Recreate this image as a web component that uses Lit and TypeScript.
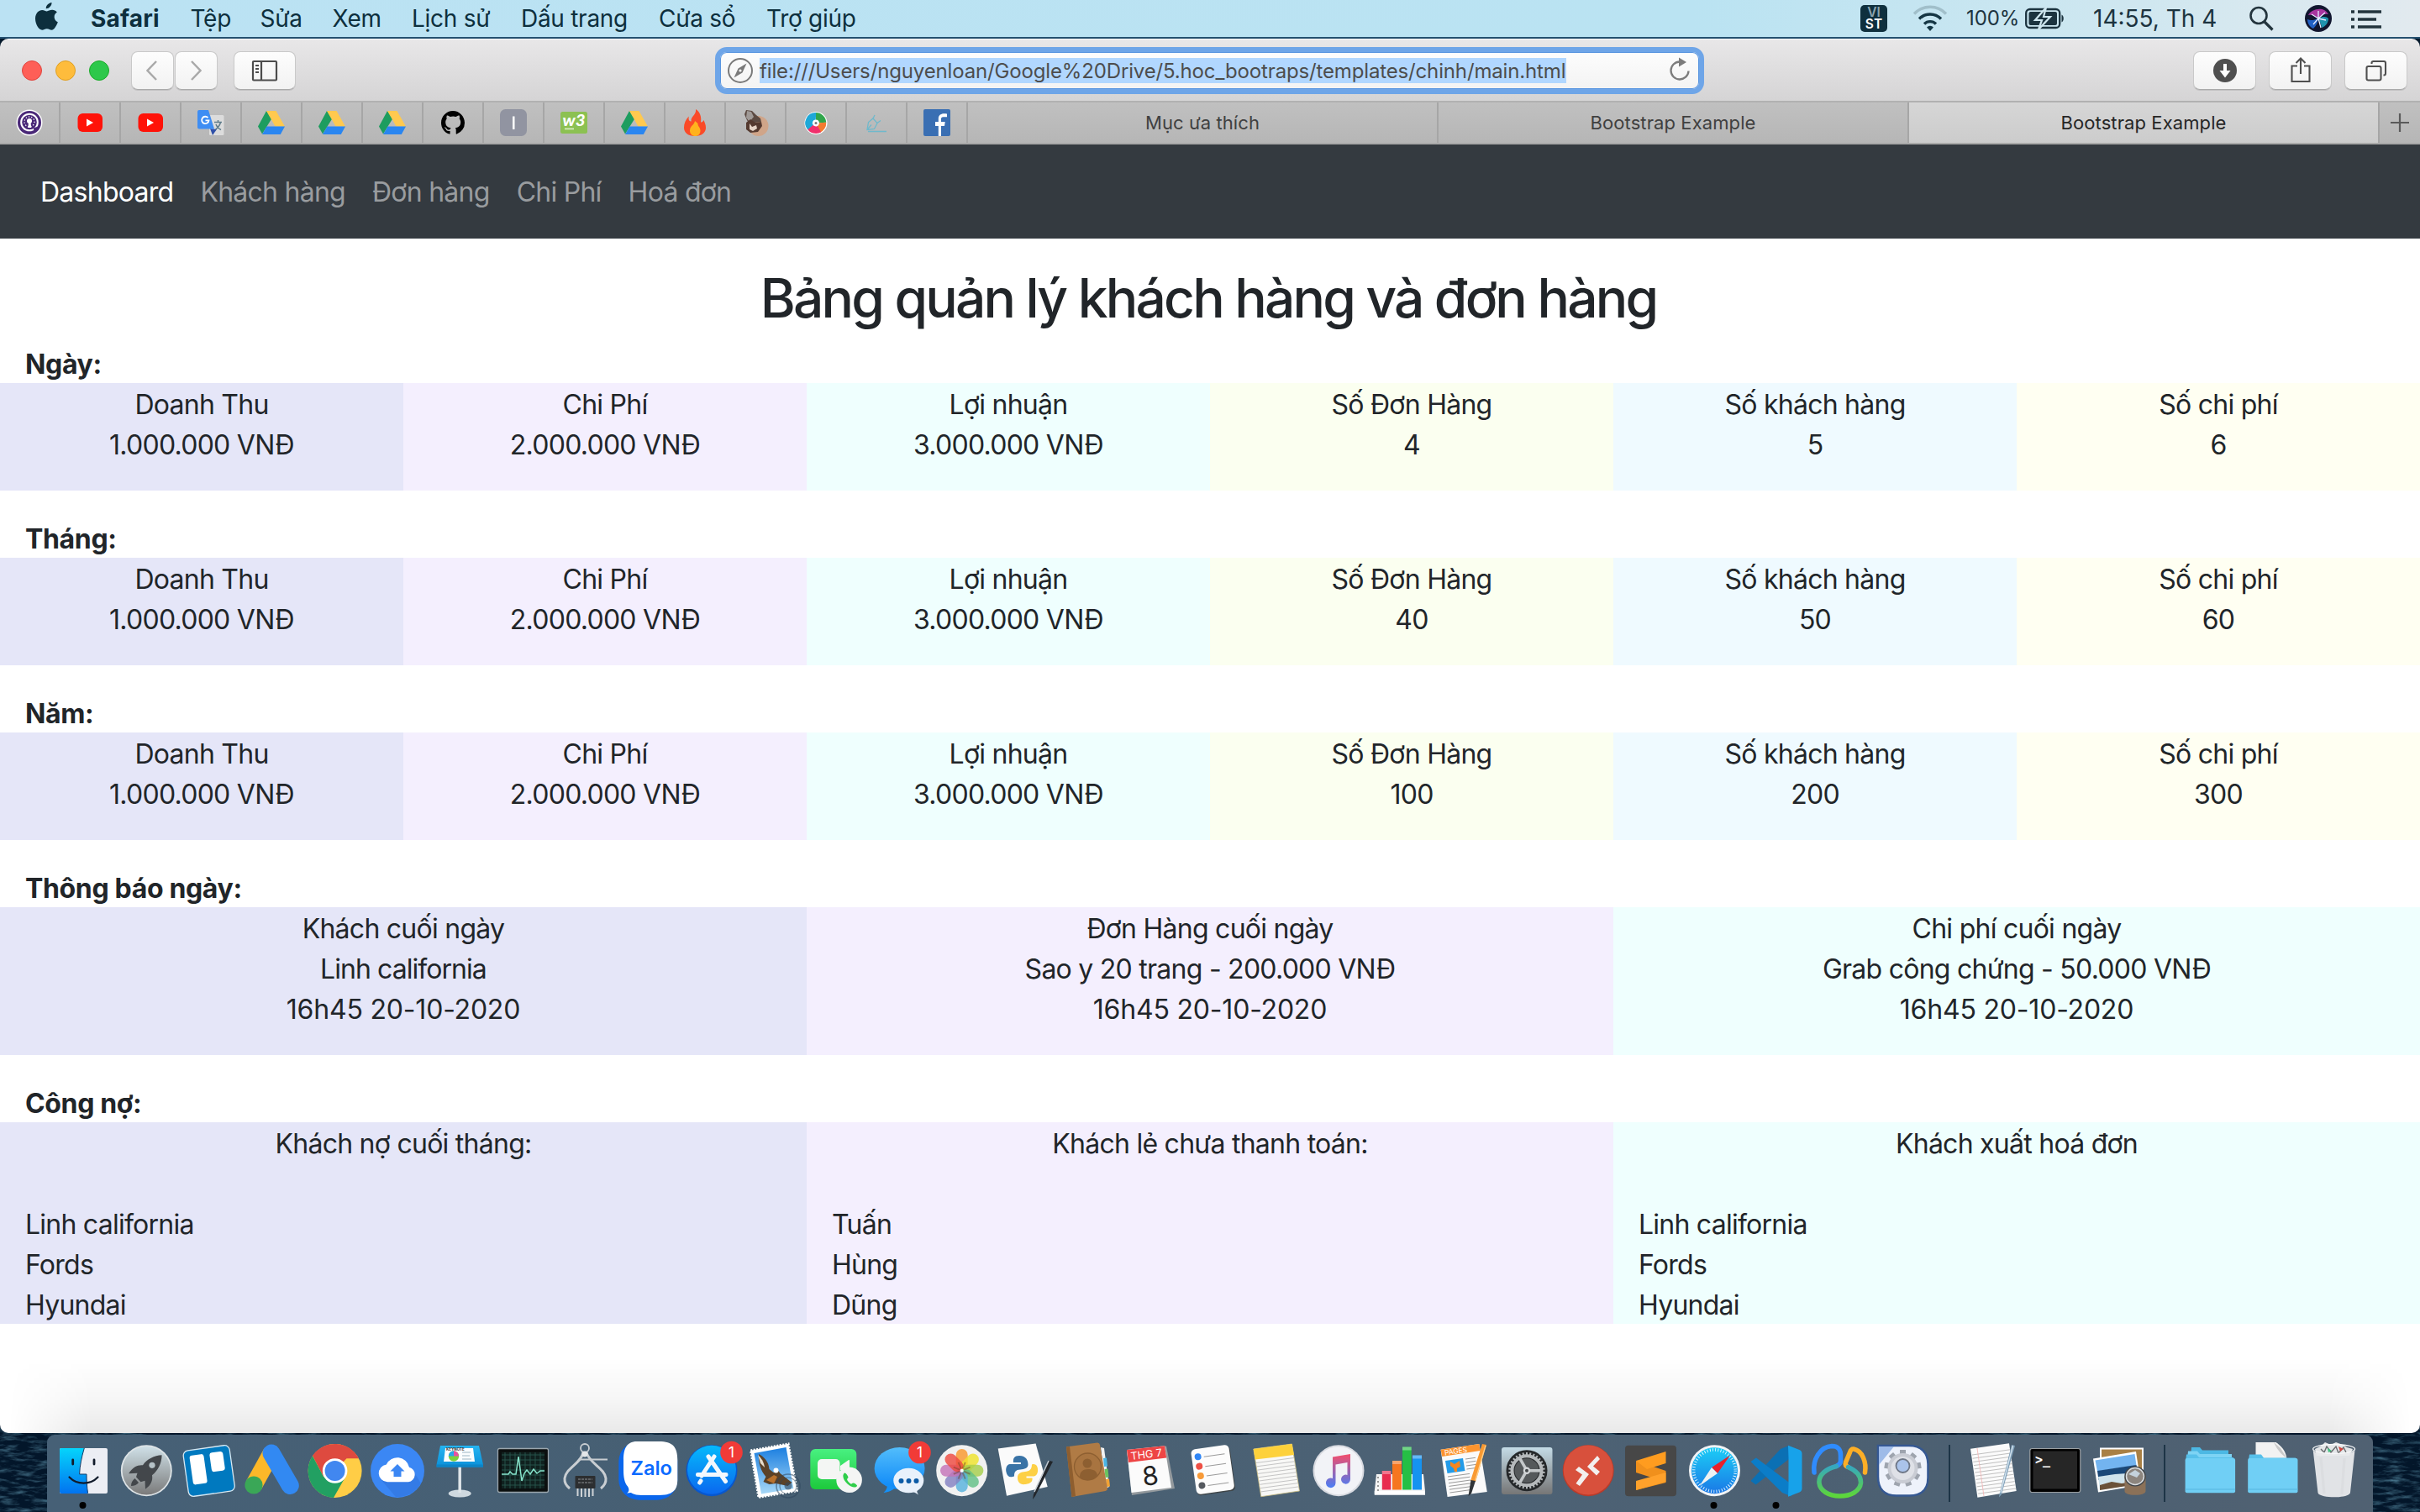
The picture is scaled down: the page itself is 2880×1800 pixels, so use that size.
import { LitElement, html, svg, css } from "lit";
import { customElement } from "lit/decorators.js";
import { classMap } from "lit/directives/class-map.js";

const MENUS: { label: string; width: number }[] = [
  { label: "Safari", width: 118.5 },
  { label: "Tệp", width: 83 },
  { label: "Sửa", width: 86 },
  { label: "Xem", width: 94.5 },
  { label: "Lịch sử", width: 130 },
  { label: "Dấu trang", width: 164 },
  { label: "Cửa sổ", width: 128 },
  { label: "Trợ giúp", width: 120 },
];

const NAV = ["Dashboard", "Khách hàng", "Đơn hàng", "Chi Phí", "Hoá đơn"];

const stats = (orders: string, customers: string, costs: string): string[][] => [
  ["Doanh Thu", "1.000.000 VNĐ"],
  ["Chi Phí", "2.000.000 VNĐ"],
  ["Lợi nhuận", "3.000.000 VNĐ"],
  ["Số Đơn Hàng", orders],
  ["Số khách hàng", customers],
  ["Số chi phí", costs],
];

const PERIODS = [
  { title: "Ngày:", cells: stats("4", "5", "6") },
  { title: "Tháng:", cells: stats("40", "50", "60") },
  { title: "Năm:", cells: stats("100", "200", "300") },
  {
    title: "Thông báo ngày:",
    cells: [
      ["Khách cuối ngày", "Linh california", "16h45 20-10-2020"],
      ["Đơn Hàng cuối ngày", "Sao y 20 trang - 200.000 VNĐ", "16h45 20-10-2020"],
      ["Chi phí cuối ngày", "Grab công chứng - 50.000 VNĐ", "16h45 20-10-2020"],
    ],
  },
];

const DEBTS = [
  { title: "Khách nợ cuối tháng:", names: ["Linh california", "Fords", "Hyundai"] },
  { title: "Khách lẻ chưa thanh toán:", names: ["Tuấn", "Hùng", "Dũng"] },
  { title: "Khách xuất hoá đơn", names: ["Linh california", "Fords", "Hyundai"] },
];

const range = (n: number) => Array.from({ length: n }, (_, i) => i);

/* ---------- pinned tab icons, 72 x 48 ---------- */
const youtube = svg`<rect x="20.5" y="13" width="29.5" height="22" rx="6" fill="#ff1208"/><path d="M31 19.5v9l8-4.5z" fill="#fff"/>`;
const drive = svg`<path d="M29 10 19 28.500l5 9 11.500-18.500z" fill="#1d9d5f"/><path d="M29 10h11.500L51 28.500H39.500z" fill="#ffc94f"/><path d="M29.500 28.500H51L45.800 38H24z" fill="#2a86f0"/>`;
const PINS = [
  svg`<circle cx="35" cy="24" r="15.5" fill="#fff"/><circle cx="35" cy="24" r="14" fill="#4a2878"/><circle cx="35" cy="23.500" r="9.800" fill="none" stroke="#fff" stroke-width="2"/><circle cx="35" cy="23" r="6" fill="none" stroke="#fff" stroke-width="1.300" stroke-dasharray="1.300 2"/><circle cx="35" cy="22" r="3" fill="#fff"/><path d="M34 24h2.500l.8 6h-4z" fill="#fff"/><path d="M40 32l6-2" stroke="#4a2878" stroke-width="3"/>`,
  youtube,
  youtube,
  svg`<rect x="33" y="15" width="17.5" height="24" rx="1.500" fill="#dcdcdc"/><path d="M34 31l8 1-5 7z" fill="#3050a8"/><path d="M21 9h11l7 22.500H21a2 2 0 0 1-2-2V11a2 2 0 0 1 2-2z" fill="#3e8df3"/><path d="M31.500 18.200a4.200 4.200 0 1 0 1 3.200h-4" fill="none" stroke="#fff" stroke-width="1.800"/><path d="M39 23.500h9M43.500 21v2.500M46.500 23.500c-1 5-4 7-6 8.500M41 26c1 3 3 5 6 6.500" fill="none" stroke="#607d8b" stroke-width="1.500"/>`,
  drive,
  drive,
  drive,
  svg`<path d="M35 10C27.300 10 21 16.300 21 24.200c0 6.200 4 11.500 9.600 13.400.7.1 1-.3 1-.7v-3c-3.900.8-4.700-1.600-4.700-1.600-.6-1.600-1.600-2-1.600-2-1.300-.9.1-.9.1-.9 1.400.1 2.200 1.500 2.200 1.500 1.200 2.100 3.200 1.500 4.100 1.200.1-1 .5-1.600.9-1.900-3.100-.4-6.400-1.600-6.400-7 0-1.500.6-2.800 1.500-3.800-.2-.4-.6-1.800.1-3.800 0 0 1.200-.4 3.900 1.400a13.300 13.300 0 0 1 7 0c2.700-1.800 3.900-1.400 3.900-1.400.7 2 .3 3.400.1 3.800.9 1 1.500 2.300 1.500 3.800 0 5.400-3.300 6.600-6.400 7 .5.400.9 1.300.9 2.600v4.100c0 .4.300.9 1 .7A14.200 14.200 0 0 0 49 24.200C49 16.300 42.700 10 35 10z" fill="#000"/>`,
  svg`<rect x="19" y="8" width="32" height="32" rx="6.500" fill="#9194a1"/><rect x="34" y="16.500" width="2.500" height="15.500" fill="#fff"/>`,
  svg`<rect x="19" y="11" width="32" height="26" rx="2.500" fill="#8cc152"/><text x="35" y="28" text-anchor="middle" font-family="Lato" font-weight="900" font-style="italic" font-size="19" textLength="27" lengthAdjust="spacingAndGlyphs" fill="#fff">w3</text><rect x="24" y="30.500" width="11" height="1.800" fill="#d5ebbb"/>`,
  drive,
  svg`<path d="M36 8c1 7-6 8-5.500 14.500C27 22 27.500 19 27.800 16.500 24 20 22 25 22 30c0 6 5 10 13 10s13-4 13-10c0-4-1.500-6-2.500-9-1 2-2 2.500-3.500 2.500C43 17 41 11 36 8z" fill="#fa4a28"/><path d="M35 22c-1 5-6 6-6 11.500 0 4 3 6.500 6.500 6.500s6-2.500 6-6.500-3.500-5.500-3-8.500z" fill="#ffb21e"/>`,
  svg`<circle cx="38.500" cy="28" r="12" fill="#d0a589"/><path d="M24 9l7 1 5 5 5 4 1 4-8 1-6 3-4-8-2-5z" fill="#5c4a42"/><path d="M25 10l5 1 3 6-5 6-4-5z" fill="#a09a97"/><path d="M24 24l5-4 6 4 7-1 1 5-5 7-9 1-5-4z" fill="#553a30"/><path d="M28 25l3 4 5-2 1 4-5 3-4-2z" fill="#e5d3c6"/>`,
  svg`<circle cx="35" cy="24.500" r="13.500" fill="#fff"/><g fill="none" stroke-width="8.500"><path d="M35 16.300A8 8 0 0 1 43 24" stroke="#31a64c"/><path d="M43 24a8 8 0 0 1-5 8" stroke="#f47b30"/><path d="M39 31.600a8 8 0 0 1-11-3" stroke="#f0306c"/><path d="M28.500 29.500A8 8 0 0 1 35 16.300" stroke="#1ea8d8"/></g><circle cx="35" cy="24.500" r="3.500" fill="#fff"/><circle cx="35" cy="24.500" r="1.500" fill="#777"/>`,
  svg`<g fill="none" stroke="#6fb9cc" stroke-width="1.300"><path d="M24 32.500l1.500-9 5.500-4.500 5 5.500-3.500 7zM24 32.500l5-6"/><path d="M31 19l2-4M36 24.500l4-3M25 34.500h22" /></g>`,
  svg`<rect x="19" y="8" width="32" height="32" rx="2" fill="#3a6fb3"/><path d="M40 40V28h4l.7-5H40v-3.300c0-1.500.5-2.500 2.600-2.500H47v-3.700c-.5-.1-2-.2-3.600-.2-4 0-6.600 2.200-6.600 6.300V23H33v5h3.800v12z" fill="#fff"/>`,
];

/* ---------- dock icons, 74.67 x 92 ---------- */
const badge = svg`<circle cx="62.500" cy="21" r="13.300" fill="#f13b37"/><text x="62.500" y="27" text-anchor="middle" font-size="17" font-family="Inter" fill="#fff">1</text>`;
const dot = svg`<circle cx="36.500" cy="84" r="4" fill="#000"/>`;

const finder = svg`<rect x="9" y="16" width="57" height="54" rx="2" fill="#eceef4"/><path d="M11 16h27.300C35 27 33 37 32.600 47H41c0 8 .5 16 1.600 23H11a2 2 0 0 1-2-2V18a2 2 0 0 1 2-2z" fill="url(#gFinder)"/><path d="M38.300 16C35 27 33 37 32.600 47H41c0 8 .5 16 1.600 22.500" fill="none" stroke="#153b66" stroke-width="1"/><path d="M24.700 30v5M50 30v5" stroke="#111b2b" stroke-width="2.800" stroke-linecap="round"/><path d="M20.500 50.500c9 9.500 25 9.500 34 0" fill="none" stroke="#111b2b" stroke-width="2.200" stroke-linecap="round"/>${dot}`;
const launchpad = svg`<circle cx="38.300" cy="42.700" r="30.500" fill="#dde3e6"/><circle cx="38.300" cy="42.700" r="28.700" fill="url(#gLaunch)"/><path d="M56.600 24.300c-9 .5-17.500 4.500-22.600 12-6-.6-12 2-16.800 10l10.300-.5-1.500 4.500 5.500 6 5-1.500.5 10c7-5 9-10.500 8-16.500 7.500-6 11.500-14.500 11.600-24z" fill="#43474b"/><circle cx="45" cy="36.300" r="3.600" fill="#b5c1c6"/><path d="M20 61c0-4 1.500-6.500 4.500-9l4.500 5c-2 2.500-5 4-9 4z" fill="#43474b"/>`;
const trello = svg`<g transform="rotate(-8 37.800 43)"><rect x="10" y="15.500" width="55.500" height="55" rx="6" fill="#0079bf" stroke="#d7e8f2" stroke-width="1.300"/><rect x="17" y="22" width="17" height="35" rx="3" fill="#fff"/><rect x="41" y="22" width="16" height="23" rx="3" fill="#fff"/></g>`;
const ads = svg`<path d="M37 22 16 60" stroke="#fcb829" stroke-width="20.600"/><path d="M37 22 59.300 60.500" stroke="#3289f2" stroke-width="21" stroke-linecap="round"/><circle cx="16" cy="60" r="10.600" fill="#3aa757"/>`;
const chrome = svg`<circle cx="38.600" cy="43" r="32" fill="#ffcd46"/><path d="M38.600 43 52.500 28.300H67A32 32 0 0 0 12 25l13 25z" fill="#de4a3f"/><path d="M12 25.300A32 32 0 0 0 37 75L49.500 53 25 50z" fill="#22a062"/><circle cx="38.600" cy="43" r="14.800" fill="#fff"/><circle cx="38.600" cy="43" r="12" fill="#4187f0"/>`;
const backup = svg`<circle cx="38" cy="43" r="32" fill="#3b87f4"/><path d="M18 53 36 74A32 32 0 0 0 66 58L58 45z" fill="#347be6"/><path d="M26 56.300a10.500 10.500 0 0 1-1.200-20.900A14.500 14.500 0 0 1 52 38.700 9 9 0 0 1 51 56.300z" fill="#fff"/><path d="M38 35l-8.500 8.500h4V50h9v-6.500h4z" fill="#3b87f4"/>`;
const keynote = svg`<ellipse cx="37.200" cy="70" rx="13.500" ry="4.500" fill="#cfd9e0"/><path d="M37.200 38v31" stroke="#dfe5e9" stroke-width="3.500"/><path d="M14 13h46l5 22.500v3H9.600v-3z" fill="url(#gKey)"/><path d="M9.600 35.500H65v3H9.600z" fill="#0c84c6"/><path d="M20 16h33l2 16H18z" fill="#fbfdfe"/><circle cx="30" cy="25.500" r="6.200" fill="#7bd23f"/><path d="M30 25.500v-6.200a6.200 6.200 0 0 1 6 6.200z" fill="#e84fa4"/><path d="M30 25.500h-6.200a6.200 6.200 0 0 1 6.200-6.200z" fill="#27a7ea"/><path d="M40 21h10M40 25h9M40 29h11" stroke="#9bb5c4" stroke-width="1.200"/><text x="21" y="19.500" font-size="4.500" font-weight="700" font-family="Inter" fill="#333">KEYNOTE</text>`;
const activity = svg`<rect x="8.500" y="16.500" width="60" height="52" rx="2" fill="#0b0f0f" stroke="#9ba6ad" stroke-width="1.300"/><rect x="13" y="21" width="51" height="43" fill="#10211f"/><path d="${range(8).map((i) => `M${17 + i * 6} 21v43`).join("")}${range(7).map((i) => `M13 ${24 + i * 6}h51`).join("")}" stroke="#28584e" stroke-width=".9"/><path d="M13 47h8l2-3 3 3h4l3-21 4 29 3-9 3-4 4 5 4-6 4 5 4-3h5" fill="none" stroke="#86e4cb" stroke-width="1.500"/>`;
const caliper = svg`<g fill="none" stroke="#c9ced2"><circle cx="37" cy="16" r="5" stroke-width="1.800"/><path d="M35 21C33 34 14 40 13 52c-.5 6 2 9 6 12M39 21c3 13 22 19 23 31 .5 6-2 9-6 12" stroke-width="3"/><path d="M30 29.500h34" stroke-width="1.800"/></g><circle cx="37" cy="23" r="3.500" fill="#e4e6e8"/><rect x="25.500" y="49" width="24" height="15" rx="1" fill="#2c2e30"/><path d="M29 53h17M29 57h17" stroke="#8c9093" stroke-width="1.200" stroke-dasharray="3 1"/><path d="M28.500 64v9M33 64v10M37.500 64v10M42 64v10M46.500 64v9" stroke="#cfd3d6" stroke-width="2"/>`;
const zalo = svg`<rect x="2.300" y="8" width="70" height="69.700" rx="24" fill="#0a66ec"/><path d="M24 8h26c17 0 22.300 7 22.300 22v24c0 13-7 18-22 18H30c-7 0-10-1-13-3l-5 .5c3-2 3-5 1-8C9 57 8 50 8 42V30C8 18 11 8 24 8z" fill="#fff"/><text x="16.500" y="48" font-size="22.500" font-weight="600" font-family="Inter" textLength="49.500" lengthAdjust="spacingAndGlyphs" fill="#0b6bff">Zalo</text>`;
const appstore = svg`<circle cx="39" cy="42.700" r="30.500" fill="#0757cf"/><circle cx="39" cy="41.800" r="29" fill="url(#gStore)"/><g stroke="#f3f8fd" stroke-width="5" stroke-linecap="round"><path d="M35 26 L55.500 55.500M42 26 27 49M22.500 47.500H56"/><path d="M26 55l-1.300 2"/></g>${badge}`;
const mail = svg`<path d="M10.300 18.700 55.300 10.700 65.700 67 19.700 74.700z" fill="#fff" stroke="#fff" stroke-width="2.500" stroke-dasharray="2 1.500"/><path d="M14.500 22 52.500 15 61.300 64 23 70.500z" fill="url(#gMail)"/><path d="M20 23c6 3 12 9 12.500 18l5 4 6-2 2 3 14 11-5 4-14-3-8 1-7-3 3-6c-6-7-9-15-8.500-27z" fill="#5b4228"/><path d="M19 24c4 4 7 8 8 15l-5-5z" fill="#e6dccb"/><path d="M29 54l9-6 4 2-4 8z" fill="#b8722e"/><circle cx="40.500" cy="42.500" r="3" fill="#fff"/><circle cx="55" cy="61" r="14" fill="none" stroke="#30465c" stroke-opacity=".55" stroke-width="1.600"/><circle cx="55" cy="61" r="10" fill="none" stroke="#30465c" stroke-opacity=".5" stroke-width="1.200"/><circle cx="55" cy="61" r="4.500" fill="#30465c" fill-opacity=".6"/>`;
const facetime = svg`<rect x="6.300" y="17" width="55" height="48" rx="6" fill="url(#gFace)"/><rect x="15" y="29" width="26.500" height="24" rx="5" fill="#f4f6f4"/><path d="M42 37l10-7c1 0 1 .5 1 1.500V42H42z" fill="#f4f6f4"/><circle cx="52.600" cy="53.700" r="15.300" fill="#f4f5f4"/><path d="M47 45.500c-3.500 3-1 9 3.500 13s9.500 5.500 11.500 2.500c.5-1-3.500-4-5-3.500l-2 1.200c-2-.8-4.500-3.500-5-5.700l1.500-2c.3-1.500-3-6-4.500-5.500z" fill="#2fce4a"/>`;
const messages = svg`<ellipse cx="38.600" cy="40" rx="30" ry="25" fill="url(#gMsg)"/><path d="M24 58c0 5-1 8-4.500 11 6-.5 11-3 14-6z" fill="#1590f7"/><ellipse cx="49.300" cy="54.500" rx="18" ry="14.800" fill="#e9f1fb"/><path d="M50 67c5 .5 7 2 11 4.500-1.500-2.500-2-4-1.500-6z" fill="#e9f1fb"/><g fill="#0b5aa6"><circle cx="40.500" cy="55" r="3"/><circle cx="49.500" cy="55" r="3"/><circle cx="58.500" cy="55" r="3"/></g>${badge}`;
const photos = svg`<circle cx="37.700" cy="42.700" r="30.500" fill="#f1f1f1"/>${["#f9972c", "#efe32c", "#a6ce4c", "#62bf86", "#58b2dd", "#8481c2", "#c474b8", "#ee4a41"].map(
  (c, i) => svg`<rect x="30.700" y="17" width="14" height="25" rx="7" fill="${c}" fill-opacity=".82" transform="rotate(${i * 45} 37.700 42.700)"/>`
)}<g stroke="#6d3a24" stroke-opacity=".45" stroke-width="2">${range(8).map((i) => svg`<path d="M37.700 40V32" transform="rotate(${i * 45 + 22.5} 37.700 42.700)"/>`)}</g><circle cx="37.700" cy="42.700" r="2" fill="#fff"/>`;
const python = svg`<path d="M5.700 16.500 50.600 10.500 64.700 62 16 72.700z" fill="#fbfbfb"/><path d="M31 25c-6 0-7.500 3-7 8h9v2H20c-4 .5-5.500 5-4.500 9.500S19 51 23 50l2-.5c0-6 2-7.500 7-8s9.500-1.500 9.500-6-2-10.500-10.500-10.500z" fill="#3973a6"/><path d="M46 35.500c0 6-3 8-8 8.500s-9 2-9 7 2.500 9 9.500 8 8.500-4 8-7.500h-7v-2h9c4-1 5-5 4.500-9s-3-6.500-7-5z" fill="#fdd045"/><path d="M67 31l4 1-21 41-3 4 1-6z" fill="#22262b"/><path d="M66 31 49 68" stroke="#c3cad1" stroke-width="1.500"/>`;
const contacts = svg`<path d="M54 15l4 1 6 46-4 2z" fill="#f2f2f2"/><path d="M57 28l4-.5 1 10-4 .5z" fill="#4cb6e4"/><path d="M58.500 41l4-.5 1 10-4 .5z" fill="#6ac45f"/><path d="M60 53l4-.5 1 9-4 .5z" fill="#f3a334"/><path d="M13 14.500 50 9.500a3 3 0 0 1 3 2.500l9 52a3 3 0 0 1-2.500 3L19.500 74z" fill="#b07b45"/><path d="M13 14.500l4-.5L24 73l-4.500 1z" fill="#8e5e2f"/><circle cx="38.500" cy="38" r="16" fill="#a87440" stroke="#8d5f31" stroke-width="1.300"/><circle cx="38" cy="34" r="5.500" fill="#8d5f31"/><path d="M29 50c0-6 4-9 10-9s10 2 11 7c-5 7-16 8-21 2z" fill="#8d5f31"/>`;
const calendar = svg`<path d="M10 19 57 13.500 67 64 16 72z" fill="#93999d"/><path d="M10 18 55 13.300 63 63 15.500 69z" fill="#fbfbfb"/><path d="M10 18 55 13.300 57.200 27.500 12 33z" fill="#ee4545"/><g transform="rotate(-7 36 42)" fill="#fff" font-family="Inter" text-anchor="middle"><text x="35.500" y="27.500" font-size="12.500">THG 7</text><text x="37" y="60" font-size="31" fill="#222">8</text></g>`;
const reminders = svg`<g transform="rotate(-8 37 42)"><rect x="15" y="16" width="46" height="54" rx="5" fill="#3f4548"/><rect x="14.500" y="14.500" width="45.500" height="54" rx="5" fill="#fcfcfc"/>${["#2f86f6", "#ee4f44", "#f79a38", "#55595f"].map((c, i) => svg`<circle cx="22" cy="${24 + i * 11.500}" r="4" fill="${c}"/><path d="M29 ${25 + i * 11.500}h25" stroke="#9b9b9b" stroke-width="1"/>`)}</g>`;
const notes = svg`<path d="M11.800 17 57.500 11 66.500 67 20.800 73.700z" fill="#f8f8f6" stroke="#c9bb7d" stroke-width=".8"/><path d="M11.800 17 57.500 11 60 24 13.700 29.500z" fill="#fdd13b"/><g stroke="#c4c4c4" stroke-width="1">${range(9).map((i) => svg`<path d="M${15 + i * 0.7} ${33.5 + i * 4.300}l${45} -6"/>`)}</g>`;
const music = svg`<circle cx="38" cy="42.700" r="30.500" fill="#d9dbe1"/><circle cx="38" cy="42.700" r="28.500" fill="#f2f3f7"/><path d="M31 26.500 52 23v30a5.500 5.500 0 1 1-3.500-5V33l-14 2.500v22a5.800 5.800 0 1 1-3.500-5.500z" fill="url(#gMusic)"/>`;
const numbers = svg`<path d="M9 47h56l2 20v4.500H6.800V67z" fill="#f4f4f4"/><path d="M6.800 67H67v4.500H6.800z" fill="#fff"/><path d="M11 50v17" stroke="#999" stroke-width="2" stroke-dasharray="2 3"/><g><rect x="15.800" y="43" width="10.500" height="22.500" fill="#e82c4f"/><rect x="28" y="31" width="11" height="34.500" fill="#f6761f"/><rect x="40" y="14.500" width="10.700" height="51" fill="#25bf45"/><rect x="52" y="24.500" width="11" height="41" fill="#1593f1"/></g><g fill="#fff" fill-opacity=".35"><path d="M15.800 43h10.500v4H15.800zM28 31h11v4H28zM40 14.500h10.700v4H40zM52 24.500h11v4H52z"/></g>`;
const pages = svg`<path d="M10.600 17.700 56.300 11 65.800 68 18.600 74z" fill="#fafafa"/><path d="M10.600 17.700 56.300 11 57.500 19 12.200 26z" fill="#fd942e"/><text x="15.500" y="24.500" font-size="8.500" font-family="Inter" fill="#fff" transform="rotate(-8 15 24)">PAGES</text><path d="M16 31 37 28l2.500 15L18.500 46z" fill="#239be8"/><path d="M22 32l5 3 6-4 1 7-4 2v4h-3l-1-4-4-3z" fill="#f7861e"/><g stroke="#9a9a9a" stroke-width="1">${range(4).map((i) => svg`<path d="M${40 + i * 0.5} ${29 + i * 4}l12-1.700"/>`)}${range(6).map((i) => svg`<path d="M${19 + i * 0.5} ${50 + i * 3.800}l26-3.600"/>`)}</g><path d="M60 11l5 1-13 44-6-1z" fill="#f99a32"/><path d="M46.500 54l5.500 1-5 15-3.500 3z" fill="#303438"/><path d="M64 13 52 54" stroke="#ffd08d" stroke-width="1.300"/>`;
const gearTeeth = (n: number, cx: number, cy: number, r: number, w: number, h: number, fill: string) =>
  range(n).map((i) => svg`<rect x="${cx - w / 2}" y="${cy - r - h}" width="${w}" height="${h + 2}" fill="${fill}" transform="rotate(${(i * 360) / n} ${cx} ${cy})"/>`);
const prefs = svg`<rect x="8" y="15" width="60.500" height="56" rx="3" fill="url(#gPrefs)"/><circle cx="38" cy="42.700" r="24.500" fill="#25282a"/>${gearTeeth(30, 38, 42.7, 18.5, 2, 3.2, "#b5b9bb")}<circle cx="38" cy="42.700" r="17.500" fill="none" stroke="#b5b9bb" stroke-width="4"/><circle cx="38" cy="42.700" r="14.500" fill="#55595b"/><g stroke="#c4c8ca" stroke-width="3.500"><path d="M38 42.700h16M38 42.700l-8-14M38 42.700l-8 14"/></g><circle cx="38" cy="42.700" r="4.200" fill="#d4d7d9"/><circle cx="38" cy="42.700" r="2" fill="#44484a"/>`;
const remote = svg`<circle cx="37.200" cy="42.700" r="30.500" fill="#b93b2a"/><circle cx="37.200" cy="42" r="29.500" fill="#d8503c"/><path d="M26 38l12 9-11 14-4.500-3 7.500-10.500-8-5.500zM48 25l3 4-8 8.500 8 6.500-4 4.500L36 38z" fill="#f3efee"/>`;
const sublime = svg`<rect x="6" y="12.700" width="61" height="60.500" rx="4" fill="#474747"/><path d="M19 31v14l25 8-25 8v5l35.500-9V43z" fill="#f0901c"/><path d="M19 31 54.500 20v14L32 41z" fill="#ff9c1f"/><path d="M19 55 54.500 45v11L19 66z" fill="#ffa12b"/>`;
const safari = svg`<circle cx="37.500" cy="42.700" r="30.500" fill="#f1f3f5"/><circle cx="37.500" cy="42.700" r="27.500" fill="url(#gSafari)"/><circle cx="37.500" cy="42.700" r="24.800" fill="none" stroke="#e9f8ff" stroke-width="3.600" stroke-dasharray=".9 2.346"/><path d="M56 24.500 41 46l-7-7z" fill="#e8202a"/><path d="M19.500 61 34 39l7 7z" fill="#eef1f3"/>${dot}`;
const vscode = svg`<path d="M6.500 55 12.500 59.500 52 29V13L42 17z" fill="#0b70b4"/><path d="M6.500 32 13 27.500 55 59v14.500L44 69z" fill="#0b7dc8"/><path d="M51 12.700 64.500 18a5 5 0 0 1 3 4.500V64a5 5 0 0 1-3 4.500L51 73.700 51.500 60V27z" fill="#17a2ea"/>${dot}`;
const navicat = svg`<g fill="none" stroke-width="5.500" stroke-linecap="round"><path d="M7 45C5 30 14 14 28 13.500c8 0 11 5 10.500 12v6c0 3-2 4.500-5 6" stroke="#2f8cff"/><path d="M67.500 45c2-12-3-26-13.500-28-2.500-.3-3.500 1-4.500 4l-5 12c-1 3 .5 4.500 3 5.500" stroke="#fcae26"/><path d="M33.500 37.500c-12 3-21.500 10-20.500 20 1 9 11 15.500 24.500 15.500s24-6 25-15.500c.5-9-6-15-15-19" stroke="url(#gNavi)"/></g>`;
const gearApp = svg`<path d="M8 13h37c14 0 22.500 8 22.500 22v16c0 14-8 21.500-22 21.500H30C15 72.500 8 64 8 50z" fill="#eef2fb" stroke="#355892" stroke-width="2.500"/><path d="M9 14h18L9 36z" fill="#9ebbe8"/>${gearTeeth(9, 37.5, 40, 17, 7, 5, "#9ea4ae")}<circle cx="37.500" cy="40" r="18" fill="#c9ccd4"/><circle cx="37.500" cy="40" r="14" fill="#dfe1e7"/><circle cx="37.500" cy="37" r="8" fill="#aac3ea" stroke="#6e7787" stroke-width="1.800"/>`;
const textedit = svg`<path d="M10 16.700 56 10.300 64.700 67 18.400 74.700z" fill="#fbfbfb"/><g stroke="#b9b9b9" stroke-width=".9">${range(12).map((i) => svg`<path d="M${12 + i * 0.65} ${24 + i * 4.200}l45-6.200"/>`)}</g><path d="M18 16 26 73" stroke="#f4b3b3" stroke-width=".8"/><path d="M59 12l4 1-16 58-3 3.500 1-6z" fill="#7f9fb8"/><path d="M60.500 13 46 69" stroke="#d6e5f0" stroke-width="1.300"/>`;
const terminal = svg`<rect x="5.800" y="16.500" width="60" height="52" rx="2.500" fill="#000" stroke="#9a9fa2" stroke-width="1.200"/><rect x="9.500" y="19.500" width="52.500" height="45" fill="#262626"/><text x="12" y="35" font-family="DejaVu Sans Mono" font-weight="700" font-size="15" fill="#fff">&gt;_</text>`;
const preview = svg`<path d="M14 15.500h52V55H14z" fill="#fff"/><path d="M16 17.500h48V53H16z" fill="#a98045"/><path d="M6 28.500 57 20l6 40-51 8.500z" fill="#fff"/><path d="M8.500 30.500 55.500 23l2 13.500-46.500 7z" fill="#73b4f0"/><path d="M11 43 57.500 36l1.500 10-46.500 8z" fill="#1b4878"/><path d="M12 50l20-3 27-2 2 13-47 8z" fill="#cfe3ec"/><path d="M14 60l14-4 12 2 20-3 1 3.500L14 66z" fill="#6b5138"/><path d="M43.500 50v17c0 6.500 25 6.500 25 0V48z" fill="#8b7158"/><ellipse cx="56" cy="49.500" rx="12.700" ry="12" fill="#3f4347"/><ellipse cx="56" cy="49.500" rx="10.500" ry="10" fill="#8c857e" stroke="#d8dcdf" stroke-width="1.500"/><path d="M48 47l8-5 6 4-4 5z" fill="#c4d2dc"/>`;
const folders = svg`<path d="M15 15h10l3 3.500h31v9H14z" fill="#4cb8e4"/><path d="M11 19.500h11l3 3.500h38v7H10z" fill="#7dd3f4"/><path d="M9 23.500h12l3 3.500h41v6H8z" fill="#57c0ea"/><rect x="7.600" y="28" width="59.500" height="41.300" rx="2" fill="#70cff5"/><path d="M7.600 65h59.500" stroke="#55b6df" stroke-width="1"/>`;
const folderDoc = svg`<path d="M16.500 9h24c6 4 12 10 13 20H16.500z" fill="#f2f2f2"/><path d="M38 9c3 7 7 13 15.500 19L46 16z" fill="#c9c9c9"/><path d="M9 23.500h14l3 4h38v6H7.500z" fill="#57c0ea"/><rect x="7.200" y="28" width="59.300" height="41.300" rx="2" fill="#70cff5"/><path d="M7.200 65h59.300" stroke="#55b6df" stroke-width="1"/>`;
const trash = svg`<path d="M13 17l8-4 4-4 7 3 6-3 8 3 5 3 7 2-4 8H15z" fill="#e4e6e8"/><path d="M20 17l4 4 3-7 5 7 6-7 3 8 6-7 3 6" fill="none" stroke="#6a6d70" stroke-width="1.400"/><path d="M28 16l5 3-4 2z" fill="#3ec07e"/><path d="M41 14l6 3-4 3z" fill="#d0453f"/><path d="M10.600 17.500c0 8 50 8 50 0L55 69c-1 7-37.500 7-38.500 0z" fill="#e9eaec" fill-opacity=".95"/><ellipse cx="35.600" cy="17" rx="25" ry="5.500" fill="none" stroke="#f7f8f9" stroke-width="1.300"/><path d="M20 27l4 43M48 28l-3 43" stroke="#d5d7da" stroke-width="3" stroke-opacity=".5"/>`;

const DOCK_APPS = [finder, launchpad, trello, ads, chrome, backup, keynote, activity, caliper, zalo, appstore, mail, facetime, messages, photos, python, contacts, calendar, reminders, notes, music, numbers, pages, prefs, remote, sublime, safari, vscode, navicat, gearApp];
const DOCK_RECENT = [textedit, terminal, preview];
const DOCK_FILES = [folders, folderDoc, trash];

const grad = (id: string, a: string, b: string) =>
  svg`<linearGradient id="${id}" x1="0" y1="0" x2="0" y2="1"><stop offset="0" stop-color="${a}"/><stop offset="1" stop-color="${b}"/></linearGradient>`;
const DEFS = svg`<defs>${grad("gFinder", "#05d4fb", "#0273f0")}${grad("gLaunch", "#cfe0e7", "#7b7b7b")}${grad("gKey", "#25b5f2", "#0b8fd8")}${grad("gStore", "#06b9fb", "#0a68ef")}${grad("gMail", "#1c7fe0", "#a7d8f7")}${grad("gFace", "#48f080", "#1dc93c")}${grad("gMsg", "#52bdfb", "#0d88f8")}${grad("gMusic", "#f44d6b", "#4a7df5")}${grad("gPrefs", "#c4dbe6", "#767676")}${grad("gSafari", "#1ccdf6", "#1a78e6")}${grad("gNavi", "#36a7c0", "#5dd63a")}</defs>`;

@customElement("mac-menubar")
class MacMenubar extends LitElement {
  static styles = css`
    :host { display: flex; justify-content: space-between; height: 44px; color: #0d2f3d; font: 28px/45px Inter, "Liberation Sans", sans-serif; background: linear-gradient(90deg, #bbe2f3 0%, #bae3f2 70%, #cfe7f0 88%, #e2eaef 100%); }
    .left, .right { display: flex; height: 44px; }
    .apple { width: 27px; height: 34px; margin: 3px 39.500px 0 41.500px; }
    .item { letter-spacing: -0.28px; white-space: nowrap; flex: none; }
    .item.app { font-weight: 700; letter-spacing: 0.2px; }
    .right { width: 666px; color: #1c333f; }
    .ime { box-sizing: border-box; flex: none; width: 32px; height: 32px; margin: 6px 30px 0 0; padding-top: 2px; border-radius: 5px; background: #0f303e; color: #fff; text-align: center; font-size: 15.500px; line-height: 14px; font-weight: 600; display: flex; flex-direction: column; }
    .ime .dim { color: #8ca4ae; }
    .wifi { width: 42px; height: 32px; margin-top: 5px; flex: none; }
    .pct { width: 67px; margin-left: 22px; font-size: 24px; line-height: 44px; letter-spacing: -0.1px; flex: none; }
    .bat { width: 48px; height: 28px; margin: 8px 0 0 3px; flex: none; }
    .clock { width: 185px; margin-left: 33px; flex: none; }
    .search { width: 32px; height: 32px; margin-top: 6px; flex: none; }
    .siri { width: 34px; height: 34px; margin: 5px 0 0 34px; flex: none; }
    .list { width: 38px; height: 24px; margin: 11px 0 0 21px; flex: none; }
  `;
  render() {
    return html`
      <div class="left">
        <svg class="apple" viewBox="0 0 27 34"><path d="M19.500 0c.3 3.500-3 7.300-6.700 7.200C12.500 3.700 16 .3 19.500 0zM25.800 11.600c-4.700 3-4 9.600 1 11.600-1.200 3.700-4.200 9.400-7.300 9.500-2.300 0-3-1.400-5.700-1.400s-3.500 1.300-5.600 1.400C4 32.800-.2 25.200 0 18.600.2 12.500 4.200 9 8.200 8.900c2.200 0 4.200 1.500 5.600 1.500S17.800 8.600 20.400 8.800c1.800.1 4 1 5.400 2.800z" fill="#0d2f3d"/></svg>
        ${MENUS.map((m, i) => html`<span class=${classMap({ item: true, app: i === 0 })} style="width:${m.width}px">${m.label}</span>`)}
      </div>
      <div class="right">
        <div class="ime"><span class="dim">VI</span><span>ST</span></div>
        <svg class="wifi" viewBox="0 0 42 32" fill="none" stroke="#153644" stroke-width="3.400"><path d="M2 11.500a26 26 0 0 1 38 0" stroke="#a1bfca"/><path d="M8 17.500a18 18 0 0 1 26 0M14 23.500a10 10 0 0 1 14 0"/><path d="M17 27.500a5.500 5.500 0 0 1 8 0L21 32z" fill="#153644" stroke="none"/></svg>
        <span class="pct">100%</span>
        <svg class="bat" viewBox="0 0 48 28"><rect x="1.200" y="3" width="40" height="22" rx="4.500" fill="none" stroke="#1c333f" stroke-width="2.300"/><rect x="4.500" y="6" width="33.500" height="16" rx="2" fill="#1c333f"/><path d="M43.500 9.500c3 1.500 3 7.500 0 9z" fill="#1c333f"/><path d="M25 1 12 16h8l-4 11 14-15h-8z" fill="#1c333f" stroke="#cfe6ef" stroke-width="2.200"/></svg>
        <span class="clock">14:55, Th 4</span>
        <svg class="search" viewBox="0 0 32 32" fill="none" stroke="#23343d" stroke-width="2.600"><circle cx="12" cy="12.500" r="9.500"/><path d="M18.500 19.500 28.500 29.500" stroke-width="3.200"/></svg>
        <svg class="siri" viewBox="0 0 34 34"><circle cx="17" cy="17" r="16" fill="#11162f"/><path d="M5 13C9 5 24 2 29 12c-5-1-8 1-12 5-4-4-8-5-12-4z" fill="#a8359f"/><path d="M4 18c4 2 8 1 13-1-1 6-3 9-6 12-4-2-7-6-7-11z" fill="#2160c4"/><path d="M17 17c6-3 10-2 12 0 0 5-3 9-8 11-1-5-2-7-4-11z" fill="#1f93ae"/><path d="M17 17 9 12M17 17l8-7M17 17l9 2M17 17l3 11M17 17 11 24M17 17V8" stroke="#e4ebff" stroke-width="1.300"/></svg>
        <svg class="list" viewBox="0 0 38 24" stroke="#23343d" stroke-width="3.600"><path d="M1 3h4M1 12h4M1 21h4M9 3h28M9 12h22M9 21h28"/></svg>
      </div>`;
  }
}

@customElement("safari-toolbar")
class SafariToolbar extends LitElement {
  static styles = css`
    :host { display: block; font-family: Inter, "Liberation Sans", sans-serif; }
    .bar { display: grid; grid-template-columns: 851px 1177px 1fr; height: 76px; box-sizing: border-box; background: linear-gradient(#e8e7e8, #d5d4d5); border-bottom: 2px solid #b1b1b1; border-top: 1px solid #f6f6f6; }
    .left { display: flex; align-items: flex-start; padding: 14px 0 0 26px; }
    .light { width: 24px; height: 24px; margin: 11px 16px 0 0; border-radius: 50%; box-sizing: border-box; border: 1px solid #e0443e; background: #fe5f57; }
    .light.min { background: #febc3c; border-color: #dfa023; }
    .light.max { background: #2dc84b; border-color: #1aab29; }
    .btn { box-sizing: border-box; height: 46px; border-radius: 8px; background: linear-gradient(#fdfdfd, #f2f2f2); border: 1px solid #c9c9c9; border-bottom-color: #aaa; box-shadow: 0 1px 0 rgba(0, 0, 0, 0.1); display: flex; align-items: center; justify-content: center; }
    .btn svg { width: 34px; height: 34px; }
    .nav { width: 51px; margin-right: 1px; }
    .first { margin-left: 9.500px; }
    .side { width: 74px; margin-left: 18.500px; }
    .url { box-sizing: border-box; height: 56px; margin-top: 9px; border: 6px solid #6ea5e8; border-radius: 14px; background: linear-gradient(#fdfdfd, #f3f3f3); display: flex; align-items: center; padding: 0 7px 0 8px; box-shadow: inset 0 0 0 1px #5a96e0; }
    .url svg { width: 32px; height: 32px; flex: none; }
    .sel { margin-left: 7px; height: 30px; width: 960px; background: #b1d7ff; color: #4d4d4d; font-size: 24px; line-height: 32px; letter-spacing: -0.15px; white-space: nowrap; }
    .grow { flex: 1; }
    .right { display: flex; justify-content: flex-end; gap: 15px; padding: 14px 15px 0 0; }
    .right .btn { width: 75px; }
    .tabs { display: flex; height: 50px; box-sizing: border-box; border-bottom: 2px solid #a9a9a9; background: linear-gradient(#c0c0c0, #b6b6b6); font-size: 22px; line-height: 49px; color: #404040; }
    .pin { width: 72px; box-sizing: border-box; border-right: 2px solid #a6a6a6; flex: none; overflow: hidden; }
    .pin svg { width: 72px; height: 48px; display: block; }
    .tab { flex: 1; text-align: center; box-sizing: border-box; border-right: 2px solid #a6a6a6; letter-spacing: 0.1px; }
    .tab.active { background: linear-gradient(#d6d6d6, #cccccc); color: #262626; }
    .plus { width: 48px; display: flex; align-items: center; justify-content: center; }
    .plus svg { width: 24px; height: 24px; }
  `;
  render() {
    return html`
      <div class="bar">
        <div class="left">
          <span class="light"></span><span class="light min"></span><span class="light max"></span>
          <span class="btn nav first"><svg viewBox="0 0 34 34" fill="none" stroke="#a9a9a9" stroke-width="2.500"><path d="M22 6 11.500 17 22 28"/></svg></span>
          <span class="btn nav"><svg viewBox="0 0 34 34" fill="none" stroke="#a9a9a9" stroke-width="2.500"><path d="M12 6l10.500 11L12 28"/></svg></span>
          <span class="btn side"><svg viewBox="0 0 34 34" fill="none" stroke="#4c4c4c" stroke-width="2.200"><rect x="3" y="6" width="28" height="22.500" rx="1"/><path d="M13 6v22.500"/><path d="M6 11h4M6 15h4M6 19h4" stroke-width="1.800"/></svg></span>
        </div>
        <div class="url">
          <svg viewBox="0 0 32 32"><circle cx="16" cy="16" r="14" fill="none" stroke="#7a7a7a" stroke-width="2"/><path d="M23.500 7.500 18.500 18.500 8.500 24.500 13.500 13.500z" fill="#7a7a7a"/><circle cx="16" cy="16" r="1.600" fill="#fff"/></svg>
          <span class="sel">file:///Users/nguyenloan/Google%20Drive/5.hoc_bootraps/templates/chinh/main.html</span>
          <span class="grow"></span>
          <svg viewBox="0 0 32 32"><path d="M26.500 16.500a10.500 10.500 0 1 1-10.500-11" fill="none" stroke="#7c7c7c" stroke-width="2.300"/><path d="M15 .5 24 6l-9 5.500z" fill="#7c7c7c"/></svg>
        </div>
        <div class="right">
          <span class="btn"><svg viewBox="0 0 34 34"><circle cx="17" cy="17" r="14" fill="#4f4f4f"/><path d="M15 9h4v8h4.500L17 25.500 10.500 17H15z" fill="#fff"/></svg></span>
          <span class="btn"><svg viewBox="0 0 34 34" fill="none" stroke="#4f4f4f" stroke-width="2.100"><path d="M13 11.500H6.500V30h21V11.500H21M17 21V2.500M11.500 8 17 2.500 22.500 8"/></svg></span>
          <span class="btn"><svg viewBox="0 0 34 34" fill="none" stroke="#4f4f4f" stroke-width="2.100"><rect x="5.500" y="12" width="17" height="16.500" rx="2"/><path d="M11.500 9V8a2 2 0 0 1 2-2H26a2 2 0 0 1 2 2v12.500a2 2 0 0 1-2 2h-.5"/></svg></span>
        </div>
      </div>
      <div class="tabs">
        ${PINS.map((p) => html`<span class="pin"><svg viewBox="0 0 72 48">${p}</svg></span>`)}
        <span class="tab">Mục ưa thích</span>
        <span class="tab">Bootstrap Example</span>
        <span class="tab active">Bootstrap Example</span>
        <span class="plus"><svg viewBox="0 0 24 24" stroke="#5a5a5a" stroke-width="2.200"><path d="M12 1v22M1 12h22"/></svg></span>
      </div>`;
  }
}

@customElement("dashboard-page")
class DashboardPage extends LitElement {
  static styles = css`
    :host { display: block; position: relative; flex: 1; background: #fff; color: #212529; font: 32px/48px Inter, "Liberation Sans", sans-serif; letter-spacing: -0.74px; overflow: hidden; }
    :host::after { content: ""; position: absolute; left: 0; right: 0; bottom: 0; height: 90px; background: linear-gradient(to top, rgba(0, 0, 0, 0.085), rgba(0, 0, 0, 0.035) 45%, transparent); -webkit-mask-image: linear-gradient(90deg, transparent 10px, #000 110px, #000 calc(100% - 110px), transparent calc(100% - 10px)); mask-image: linear-gradient(90deg, transparent 10px, #000 110px, #000 calc(100% - 110px), transparent calc(100% - 10px)); }
    nav { display: flex; align-items: center; height: 112px; box-sizing: border-box; padding: 2px 32px 0; background: #343a40; }
    nav span { padding: 0 16px; color: #999c9f; line-height: 48px; }
    nav .on { color: #fff; }
    h2 { margin: 32px 0 15px; padding-right: 4px; font-size: 64px; line-height: 77px; font-weight: 500; letter-spacing: -2.770px; text-align: center; }
    .label, .row p { box-sizing: border-box; height: 48px; padding-top: 2px; line-height: 46px; }
    .label { padding-top: 3px; padding-left: 30px; font-weight: 700; letter-spacing: -0.35px; }
    .row { display: grid; grid-auto-flow: column; grid-auto-columns: 1fr; margin-bottom: 32px; text-align: center; }
    .row > div { padding-bottom: 32px; }
    .row > div:nth-child(1) { background: #e5e6f8; }
    .row > div:nth-child(2) { background: #f4effe; }
    .row > div:nth-child(3) { background: #effffe; }
    .row > div:nth-child(4) { background: #fbfff0; }
    .row > div:nth-child(5) { background: #effaff; }
    .row > div:nth-child(6) { background: #fffff2; }
    .row p { margin: 0; padding-top: 3px; }
    .row .tight { letter-spacing: -0.200px; }
    .row .name { letter-spacing: -0.950px; }
    .row.debts > div { padding: 0 0 0 30px; text-align: left; }
    .row.debts .head { text-align: center; margin: 0 0 48px -30px; }
    .debts .names { letter-spacing: -0.760px; }
  `;
  render() {
    return html`
      <nav>${NAV.map((n, i) => html`<span class=${classMap({ on: i === 0 })}>${n}</span>`)}</nav>
      <h2>Bảng quản lý khách hàng và đơn hàng</h2>
      ${PERIODS.map(
        (p) => html`<div class="label">${p.title}</div>
          <div class="row">${p.cells.map((c) => html`<div>${c.map((t) => html`<p class=${classMap({ tight: t.startsWith("16h"), name: t.startsWith("Linh") })}>${t}</p>`)}</div>`)}</div>`
      )}
      <div class="label">Công nợ:</div>
      <div class="row debts">
        ${DEBTS.map((d) => html`<div><p class="head">${d.title}</p>${d.names.map((n) => html`<p class="names">${n}</p>`)}</div>`)}
      </div>`;
  }
}

@customElement("mac-dock")
class MacDock extends LitElement {
  static styles = css`
    :host { display: flex; box-sizing: border-box; height: 92px; width: 2768px; margin: 2px auto 0; padding-left: 5.700px; border-radius: 9px 9px 0 0; background: linear-gradient(90deg, #466076, #475f72 40%, #4d6275 60%, #4c6072 80%, #506172); position: relative; }
    .app { width: 74.670px; height: 92px; flex: none; display: block; overflow: visible; }
    .sep { width: 2px; height: 68px; margin: 12px 14px 0 18px; background: #1d3446; flex: none; }
    .sep.two { margin: 12px 15.500px 0 16px; }
    .defs { position: absolute; width: 0; height: 0; }
  `;
  render() {
    const draw = (list: unknown[]) => list.map((i) => html`<svg class="app" viewBox="0 0 74.67 92">${i}</svg>`);
    return html`<svg class="defs">${DEFS}</svg>${draw(DOCK_APPS)}<span class="sep"></span>${draw(DOCK_RECENT)}<span class="sep two"></span>${draw(DOCK_FILES)}`;
  }
}

@customElement("app-root")
class AppRoot extends LitElement {
  static styles = css`
    :host { display: flex; flex-direction: column; width: 2880px; height: 1800px; overflow: hidden; position: relative; background: #04182b; }
    .sea { position: absolute; left: 0; bottom: 0; width: 2880px; height: 110px; }
    .strip { height: 2px; background: #24506f; }
    .window { position: relative; display: flex; flex-direction: column; height: 1660px; border-radius: 10px; overflow: hidden; }
    mac-menubar, safari-toolbar { flex: none; }
    mac-dock { position: relative; flex: none; }
  `;
  render() {
    return html`
      <svg class="sea" viewBox="0 0 2880 110">
        <filter id="waves" x="0" y="0" width="100%" height="100%"><feTurbulence type="fractalNoise" baseFrequency="0.05 0.2" numOctaves="4" seed="7"/><feColorMatrix values="0 0 0 0 .1  0 0 0 0 .27  0 0 0 0 .38  1.6 0 0 0 -.72"/></filter>
        <rect width="2880" height="110" fill="#03162a"/><rect width="2880" height="110" filter="url(#waves)"/>
      </svg>
      <mac-menubar></mac-menubar>
      <div class="strip"></div>
      <div class="window">
        <safari-toolbar></safari-toolbar>
        <dashboard-page></dashboard-page>
      </div>
      <mac-dock></mac-dock>`;
  }
}
